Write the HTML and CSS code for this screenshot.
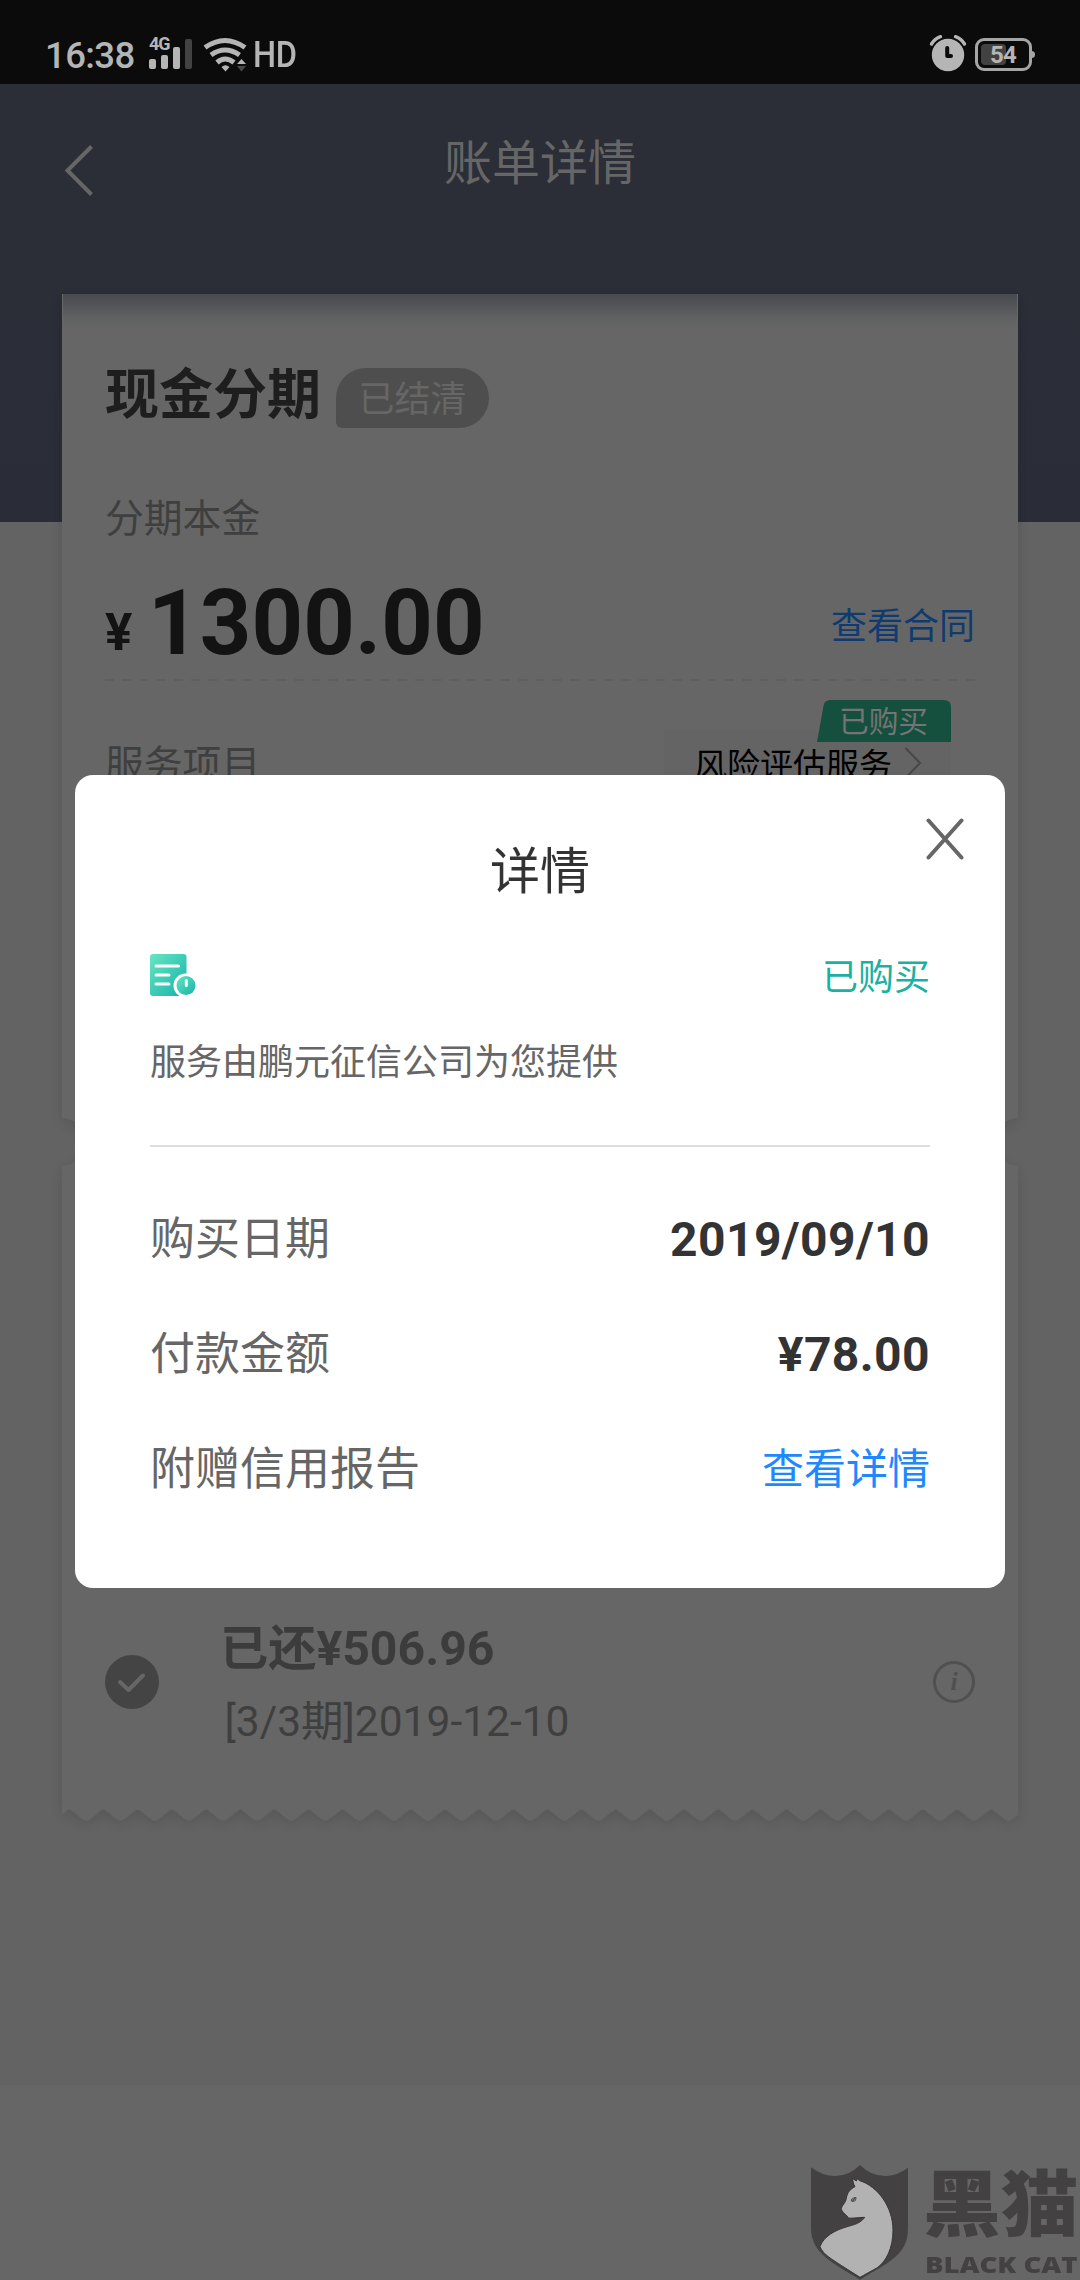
FILE: index.html
```html
<!DOCTYPE html>
<html lang="zh-CN">
<head>
<meta charset="utf-8">
<title>账单详情</title>
<link rel="stylesheet" href="styles.css">
</head>
<body>
<div class="screen">
  <div class="status">
    <span class="time">16:38</span>
    <span class="signal"><span class="net">4G</span>
      <svg width="44" height="32" viewBox="148 38 44 32"><g fill="#b5b5b5"><rect x="149" y="59" width="7" height="10" rx="2"/><rect x="161" y="55" width="7" height="14" rx="2"/><rect x="173" y="47" width="7" height="22" rx="2"/></g><rect x="185" y="39" width="7" height="30" rx="2" fill="#424242"/></svg>
    </span>
    <svg class="wifi" width="44" height="36" viewBox="203 37 44 36"><g fill="none" stroke="#b5b5b5" stroke-width="5"><path d="M205 47.500Q225 33.500 245 47.500"/><path d="M211 55Q225 45 239.500 55"/><path d="M217 62.500Q225 55.500 234 62.500"/></g><path d="M221.500 67Q225.500 63.500 229.500 67L225.500 71.500Z" fill="#b5b5b5"/><path d="M237 64L241.500 59L246 64Z" fill="#b5b5b5"/><path d="M237 66H246L241.500 71.500Z" fill="#484848"/></svg>
    <span class="hd">HD</span>
    <svg class="alarm" width="38" height="38" viewBox="929 34 38 38"><circle cx="948" cy="55" r="16.200" fill="#b5b5b5"/><g fill="none" stroke="#b5b5b5" stroke-width="3.400" stroke-linecap="round"><path d="M931.500 44Q935 38.500 940.500 36.700M964.500 44Q961 38.500 955.500 36.700"/></g><path d="M947.200 48V56H951" fill="none" stroke="#0b0b0b" stroke-width="4" stroke-linecap="round" stroke-linejoin="round"/></svg>
    <span class="battery"><i></i><b>54</b></span>
  </div>
  <header class="header">
    <svg class="back" width="32" height="54" viewBox="0 0 32 54"><path d="M29.500 3.500L5.500 27.500L29.500 51.500" fill="none" stroke="#666" stroke-width="4"/></svg>
    <h1>账单详情</h1>
  </header>
  <main class="bill">
    <svg class="paper" width="1016" height="1586" viewBox="-30 -30 1016 1586">
      <defs>
        <linearGradient id="topShade" x1="0" y1="0" x2="0" y2="1"><stop offset="0" stop-color="#484a50"/><stop offset=".3" stop-color="#515357"/><stop offset=".65" stop-color="#606162"/><stop offset="1" stop-color="#666"/></linearGradient>
        <pattern id="teeth" width="34.140" height="16" patternUnits="userSpaceOnUse" y="1515" x="7.500"><path d="M0 0H34.140L32 1L20 10.500Q17 12.500 14 10.500L2 1Z" fill="#666"/></pattern>
        <filter id="soft" x="-5%" y="-5%" width="110%" height="110%"><feDropShadow dx="0" dy="4" stdDeviation="7" flood-color="#000" flood-opacity=".13"/></filter>
      </defs>
      <g filter="url(#soft)"><path d="M0 0H956V824A24 24 0 0 0 956 872V1515.500H0V872A24 24 0 0 0 0 824Z" fill="#666"/><rect y="1515" width="956" height="14" fill="url(#teeth)"/></g>
      <rect x="1" width="954" height="36" fill="url(#topShade)"/>
    </svg>
    <div class="product"><h2>现金分期</h2><span class="pill">已结清</span></div>
    <div class="label">分期本金</div>
    <div class="amount"><span class="yen">¥</span><span class="sum">1300.00</span><a class="contract">查看合同</a></div>
    <svg class="dashes" width="870" height="2"><path d="M0 1H870" stroke="#5d5d5d" stroke-width="1.500" stroke-dasharray="9 8.220"/></svg>
    <div class="service">
      <span class="label">服务项目</span>
      <div class="service-box">风险评估服务
        <svg width="18" height="34" viewBox="0 0 18 34"><path d="M1.500 2L16 17L1.500 32" fill="none" stroke="#474747" stroke-width="2"/></svg>
        <div class="tag"><svg width="134" height="42" viewBox="0 0 134 42"><path d="M0 42L6.500 6Q7.500 0 13 0H127Q134 0 134 7V42Z" fill="#15503f"/></svg><span>已购买</span></div>
      </div>
    </div>
    <div class="period">
      <svg width="54" height="54" viewBox="0 0 54 54"><circle cx="27" cy="27" r="27" fill="#444"/><path d="M15 27L23.500 35L38 20.500" fill="none" stroke="#666" stroke-width="4" stroke-linecap="round" stroke-linejoin="round"/></svg>
      <div class="period-text"><strong>已还¥506.96</strong><span>[3/3期]2019-12-10</span></div>
      <span class="info">i</span>
    </div>
  </main>
  <div class="bottom">
    <svg class="shield" width="98" height="116" viewBox="153 135 294 348"><path d="M153 142Q187 168 225 168Q268 168 300 135Q332 168 376 168Q410 168 444 143V325C444 405 385 428 300 479C220 430 153 400 153 325Z" fill="#434142"/><path d="M276 174L289 183L292 176L299 182C354 199 399 262 399 330C399 385 378 425 352 443L300 472L245 437C220 420 190 405 180 380C190 350 225 330 265 319C292 312 305 305 314 292C295 292 280 296 265 294C262 285 244 277 244 265C247 253 257 250 259 235C262 215 272 207 285 200C279 192 280 182 276 174Z" fill="#b2b2b2" stroke="#373536" stroke-width="3"/><path d="M272 242Q274 232 289 231Q291 244 278 246Z" fill="#434142"/><path d="M281 233L276 242M286 235L282 244" stroke="#b2b2b2" stroke-width="2"/></svg>
    <div class="mark"><span class="mark-zh">黑猫</span><span class="mark-en">BLACK CAT</span></div>
  </div>
  <section class="modal">
    <svg class="close" width="40" height="42" viewBox="0 0 40 42"><path d="M3.500 2.500L36.500 39.500M36.500 2.500L3.500 39.500" stroke="#666" stroke-width="4" stroke-linecap="round"/></svg>
    <h3>详情</h3>
    <div class="provider">
      <svg width="46" height="44" viewBox="0 0 46 44"><defs><linearGradient id="mint" x1="0" y1="0" x2="1" y2="1"><stop offset="0" stop-color="#66e6c2"/><stop offset="1" stop-color="#16b2aa"/></linearGradient></defs><rect width="36.500" height="42" rx="3" fill="url(#mint)"/><circle cx="35.500" cy="31.500" r="12" fill="#fff"/><circle cx="36" cy="31.500" r="9.500" fill="url(#mint)"/><path d="M6 12H28.500M6 21H19M6 30H19M36.300 26.500V31.500" stroke="#fff" stroke-width="3" stroke-linecap="round"/></svg>
      <span>已购买</span>
    </div>
    <p>服务由鹏元征信公司为您提供</p>
    <dl>
      <div><dt>购买日期</dt><dd>2019/09/10</dd></div>
      <div><dt>付款金额</dt><dd>¥78.00</dd></div>
      <div><dt>附赠信用报告</dt><dd class="link">查看详情</dd></div>
    </dl>
  </section>
</div>
</body>
</html>
```
FILE: styles.css
```css
* { box-sizing: border-box; margin: 0; padding: 0; }
body { font-family: Roboto, "Noto Sans CJK SC", sans-serif; background: #636363; }
svg { display: block; flex: none; }
.screen { position: relative; width: 1080px; height: 2280px; overflow: hidden; display: flex; flex-direction: column; background: #636363; white-space: nowrap; }

.status { height: 84px; flex: none; background: #0b0b0b; color: #b5b5b5; display: flex; align-items: flex-start; padding: 34px 45px 0 45px; }
.time { font-size: 36.5px; line-height: 44px; font-weight: 500; width: 103px; letter-spacing: -.6px; }
.signal { position: relative; padding-top: 4px; width: 55px; }
.net { position: absolute; left: 1px; top: 0; font-size: 18px; line-height: 20px; font-weight: 700; letter-spacing: -1px; }
.wifi { margin-top: 3px; }
.hd { font-size: 37px; line-height: 41px; margin-left: 6px; transform: scaleX(.88); transform-origin: left; font-weight: 500; letter-spacing: -.5px; }
.alarm { margin-left: auto; }
.battery { position: relative; width: 57px; height: 33px; margin: 4px 3px 0 8px; border: 3px solid #a5a5a5; border-radius: 9px; }
.battery::after { content: ""; position: absolute; right: -6px; top: 10px; width: 4px; height: 7px; border-radius: 0 4px 4px 0; background: #a5a5a5; }
.battery i { position: absolute; left: 3px; top: 3px; width: 25px; height: 21px; border-radius: 4px; background: #424242; }
.battery b { position: absolute; left: 12px; top: 1px; font-size: 24px; line-height: 26px; letter-spacing: -.8px; }

.header { height: 438px; flex: none; background: linear-gradient(#2c2e37, #2a2d37); padding: 47px 62px; display: flex; align-items: flex-start; }
.header h1 { flex: 1; margin-right: 32px; text-align: center; font-size: 48px; line-height: 66px; font-weight: 400; color: #666; }
.back { margin-top: 12px; }

.bill { position: relative; width: 956px; height: 1526px; flex: none; margin: -228px auto 0; padding: 72px 43px 74px 43px; display: flex; flex-direction: column; }
.paper { position: absolute; left: -30px; top: -30px; }
.bill > :not(.paper) { position: relative; }
.product { display: flex; gap: 15px; align-items: flex-start; height: 60px; }
h2 { font-size: 54px; line-height: 60px; color: #1e1e1e; }
.pill { margin-top: 2px; width: 153px; height: 60px; line-height: 64px; text-align: center; font-size: 36px; color: #666; background: #4e4e4e; border-radius: 30px 30px 30px 6px; }
.label { font-size: 38.8px; line-height: 40px; color: #3f3f3f; }
.bill > .label { margin-top: 73px; }
.amount { margin-top: 40px; height: 90px; display: flex; color: #131313; font-weight: 700; }
.yen { font-size: 51px; line-height: 108px; width: 43px; }
.sum { font-size: 90px; line-height: 89px; letter-spacing: .1px; }
.contract { margin-left: auto; font-size: 36px; line-height: 97px; font-weight: 400; color: #103b70; }
.dashes { margin-top: 10px; }
.service { margin-top: 50px; padding-right: 24px; display: flex; justify-content: space-between; align-items: center; height: 66px; }
.service > .label { padding-top: 1px; }
.service-box { position: relative; width: 287px; height: 66px; display: flex; align-items: center; justify-content: space-between; padding: 0 29px 2px 30px; background: #646464; color: #000; font-size: 33px; }
.tag { position: absolute; right: 0; top: -31px; width: 134px; height: 42px; }
.tag span { position: absolute; left: 22px; top: 0; font-size: 29.7px; line-height: 44px; color: #747474; }
.period { margin-top: auto; height: 125px; display: flex; align-items: center; }
.period > svg { margin-top: -3px; }
.period-text { margin-left: 61px; display: flex; flex-direction: column; gap: 19px; }
.period-text strong { font-size: 48.2px; line-height: 56px; color: #3c3c3c; }
.period-text span { font-size: 42.5px; line-height: 51px; color: #3f3f3f; padding-left: 4.500px; }
.info { margin-left: auto; margin-top: -3px; width: 42px; height: 42px; border: 3px solid #505050; border-radius: 50%; text-align: center; font: italic bold 26px/35px "Liberation Serif", serif; color: #505050; }

.bottom { margin-top: auto; height: 195px; background: #666; display: flex; justify-content: flex-end; align-items: flex-end; }
.shield { margin-bottom: -1px; }
.mark { width: 157px; margin-left: 14px; height: 112px; color: #434142; }
.mark span { display: block; }
.mark-zh { font-size: 72px; line-height: 76px; font-weight: 900; transform: scaleX(1.08); transform-origin: left; }
.mark-en { margin: 8px 0 0 2px; font-family: "Open Sans", sans-serif; font-size: 22px; line-height: 24px; font-weight: 800; transform: scaleX(1.25); transform-origin: left; }

.modal { position: absolute; left: 75px; top: 775px; width: 930px; height: 813px; border-radius: 18px; background: #fff; padding: 65px 75px; color: #666; }
.close { position: absolute; right: 40px; top: 43px; }
h3 { font-size: 50px; line-height: 64px; font-weight: 400; color: #333; text-align: center; }
.provider { margin-top: 50px; height: 44px; display: flex; align-items: center; justify-content: space-between; font-size: 36px; line-height: 44px; color: #1ab1a2; }
.provider span { margin-top: 3px; }
.modal p { margin-top: 40px; font-size: 36px; line-height: 50px; border-bottom: 2px solid #ddd; height: 109px; }
dl { padding-top: 59px; }
dl div { height: 65px; margin-bottom: 50px; display: flex; justify-content: space-between; line-height: 67px; }
dt { font-size: 45px; }
dd { font-size: 48px; font-weight: 700; color: #333; letter-spacing: .4px; }
dd.link { font-size: 42px; font-weight: 400; color: #1e88ff; letter-spacing: 0; }
```
